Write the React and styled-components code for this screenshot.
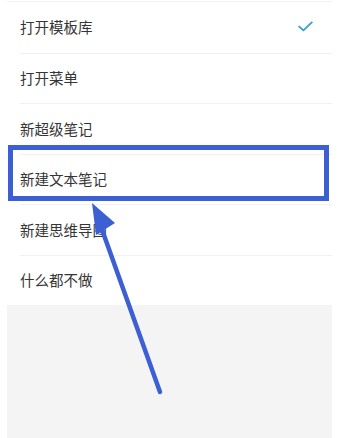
import React from "react";
import styled, { createGlobalStyle } from "styled-components";

const GlobalStyle = createGlobalStyle`
  html, body {
    margin: 0;
    padding: 0;
    background: #ffffff;
  }
  body {
    font-family: "Noto Sans CJK SC", "Noto Sans", sans-serif;
  }
`;

const Page = styled.div`
  position: relative;
  width: 345px;
  height: 438px;
  overflow: hidden;
  background: #ffffff;
`;

const Sheet = styled.div`
  display: flex;
  flex-direction: column;
  margin-left: 7px;
  width: 325px;
  padding-top: 1px;
`;

const OptionList = styled.ul`
  list-style: none;
  margin: 0;
  padding: 0 0 0 13px;
  border-top: 1px solid #f2f2f2;
`;

const OptionRow = styled.li`
  box-sizing: border-box;
  height: 50.5px;
  display: flex;
  align-items: center;
  justify-content: space-between;
  padding-right: 19px;
  padding-bottom: 1px;
  border-top: ${(p) => (p.$first ? "none" : "1px solid #f1f1f1")};
  font-size: 14.5px;
  color: #353535;
`;

const Filler = styled.div`
  height: 140px;
  background: #f4f4f4;
`;

const Highlight = styled.div`
  position: absolute;
  left: 8px;
  top: 145px;
  width: 321px;
  height: 56px;
  box-sizing: border-box;
  border: 5px solid #3c5fd3;
`;

const ArrowLayer = styled.svg`
  position: absolute;
  left: 0;
  top: 0;
  pointer-events: none;
`;

const Check = () => (
  <svg width="15" height="11" viewBox="0 0 15 11">
    <path
      d="M1.2 5.6 L5.4 9.4 L13.8 1.4"
      fill="none"
      stroke="#3aa3c9"
      strokeWidth="1.9"
      strokeLinecap="round"
      strokeLinejoin="round"
    />
  </svg>
);

const options = [
  { label: "打开模板库", checked: true },
  { label: "打开菜单" },
  { label: "新超级笔记" },
  { label: "新建文本笔记" },
  { label: "新建思维导图" },
  { label: "什么都不做" },
];

export default function App() {
  return (
    <>
      <GlobalStyle />
      <Page>
        <Sheet>
          <OptionList>
            {options.map((o, i) => (
              <OptionRow key={o.label} $first={i === 0}>
                <span>{o.label}</span>
                {o.checked && <Check />}
              </OptionRow>
            ))}
          </OptionList>
          <Filler />
        </Sheet>

        <Highlight />

        <ArrowLayer width="345" height="438" viewBox="0 0 345 438">
          <line
            x1="100"
            y1="224"
            x2="160"
            y2="392"
            stroke="#3c5fd3"
            strokeWidth="4.5"
            strokeLinecap="round"
          />
          <polygon points="92,203 115,223 96,235" fill="#3c5fd3" />
        </ArrowLayer>
      </Page>
    </>
  );
}
